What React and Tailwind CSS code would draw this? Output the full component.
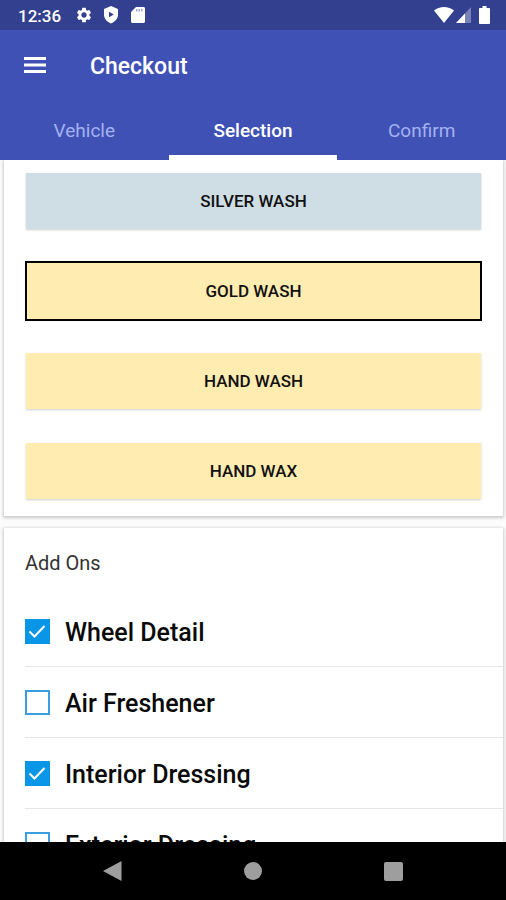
import { useState } from "react";
import { MdSettings } from "react-icons/md";

const tabs = ["Vehicle", "Selection", "Confirm"];
const washes = ["Silver Wash", "Gold Wash", "Hand Wash", "Hand Wax"];
const addOns = ["Wheel Detail", "Air Freshener", "Interior Dressing", "Exterior Dressing"];

function StatusBar() {
  return (
    <div className="flex h-[30px] shrink-0 items-center bg-[#32408f] pl-[18px] pr-4 text-white">
      <span className="w-[57px] pt-0.5 text-[17px] font-medium leading-[28px]">12:36</span>
      <MdSettings className="size-[18px]" />
      <svg className="ml-2.5 h-[18px] w-4" viewBox="0 0 16 18" fill="currentColor" aria-hidden="true">
        <path fillRule="evenodd" d="M8 0 15 3v5.500c0 4.200-3 7.600-7 8.900C4 16.100 1 12.700 1 8.500V3L8 0Zm-2 5.800v5.400L10.800 8.500 6 5.800Z" />
      </svg>
      <svg className="ml-3 h-4 w-[14px]" viewBox="0 0 14 16" aria-hidden="true">
        <path fill="currentColor" d="M5 0h7.500C13.300 0 14 .7 14 1.500v13c0 .8-.7 1.500-1.500 1.500h-11C.7 16 0 15.300 0 14.500V5l5-5Z" />
        <path fill="#a3aad2" d="M5 2h1.500v2.500H5zM7.500 2H9v2.500H7.500zM10 2h1.500v2.500H10z" />
      </svg>
      <svg className="ml-auto h-4 w-5" viewBox="0 0 20 16" fill="currentColor" aria-hidden="true">
        <path d="M10 16 0 3.500C2.800 1.300 6.200 0 10 0s7.200 1.300 10 3.500L10 16Z" />
      </svg>
      <svg className="ml-0.5 h-4 w-[15px]" viewBox="0 0 15 16" fill="currentColor" aria-hidden="true">
        <path opacity=".35" d="M15 0v16H0L15 0Z" />
        <path d="M9 6.400V16H0l9-9.600Z" />
      </svg>
      <svg className="ml-2 h-[18px] w-[11px]" viewBox="0 0 11 18" fill="currentColor" aria-hidden="true">
        <path d="M3.500 0h4v2H10c.6 0 1 .4 1 1v14c0 .6-.4 1-1 1H1c-.6 0-1-.4-1-1V3c0-.6.4-1 1-1h2.500V0Z" />
      </svg>
    </div>
  );
}

function AddOn({ name, checked, onToggle }) {
  return (
    <li className="ml-[21px] border-b border-[#e6e6e6]">
      <label className="flex h-[70px] items-center gap-[15px] text-[25px] font-medium leading-8 text-[#0a0a0a]">
        <span className="grid">
          <input
            type="checkbox"
            checked={checked}
            onChange={onToggle}
            className="col-start-1 row-start-1 size-[25px] appearance-none border-2 border-[#3a9fe0] bg-white checked:border-[#0a96e6] checked:bg-[#0a96e6]"
          />
          {checked && (
            <svg className="pointer-events-none col-start-1 row-start-1 size-[25px]" viewBox="0 0 25 25" fill="none" stroke="white" strokeWidth="2" aria-hidden="true">
              <path d="m4.500 12.500 5 5L19.500 7" />
            </svg>
          )}
        </span>
        <span className="pt-1">{name}</span>
      </label>
    </li>
  );
}

export default function App() {
  const [tab, setTab] = useState("Selection");
  const [wash, setWash] = useState("Gold Wash");
  const [picked, setPicked] = useState(["Wheel Detail", "Interior Dressing"]);
  const toggle = (name) =>
    setPicked((p) => (p.includes(name) ? p.filter((n) => n !== name) : [...p, name]));

  return (
    <div className="flex h-screen flex-col bg-[#fcfcfc] font-['Roboto',sans-serif]">
      <StatusBar />
      <header className="shrink-0 bg-[#3f51b5] text-white">
        <div className="flex h-[72px] items-center gap-10 pl-5">
          <button type="button" aria-label="Open menu">
            <svg className="size-[30px]" viewBox="0 0 30 30" fill="currentColor">
              <path d="M4 6h22v3H4zM4 12.500h22v3H4zM4 19h22v3H4z" />
            </svg>
          </button>
          <h1 className="pt-0.5 text-[23px] font-medium leading-8">Checkout</h1>
        </div>
        <nav className="grid grid-cols-3">
          {tabs.map((t) => (
            <button
              key={t}
              type="button"
              onClick={() => setTab(t)}
              className={
                "h-[58px] border-b-[5px] pt-1 text-[19px] leading-6 " +
                (t === tab ? "border-white font-medium text-white" : "border-transparent text-[#a3b1f0]")
              }
            >
              {t}
            </button>
          ))}
        </nav>
      </header>

      <main className="flex min-h-0 flex-1 flex-col gap-3 overflow-hidden pl-1 pr-[3px]">
        <section className="flex shrink-0 flex-col gap-[34px] bg-white px-[22px] pb-[17px] pt-[13px] shadow-[0_1px_3px_1px_rgba(0,0,0,0.2)]">
          {washes.map((w) => (
            <button
              key={w}
              type="button"
              onClick={() => setWash(w)}
              className={
                "pt-0.5 text-[17px] font-medium uppercase text-[#111] " +
                (w === "Silver Wash" ? "bg-[#cfdde4] " : "bg-[#ffecb0] ") +
                (w === wash ? "-mx-px -my-0.5 h-[60px] border-2 border-black" : "h-14 shadow-[0_1px_2px_rgba(0,0,0,0.2)]")
              }
            >
              {w}
            </button>
          ))}
        </section>

        <section className="shrink-0 bg-white pt-[22px] shadow-[0_1px_3px_1px_rgba(0,0,0,0.2)]">
          <h2 className="mb-5 pl-[21px] text-[20px] leading-[26px] text-[#333]">Add Ons</h2>
          <ul>
            {addOns.map((a) => (
              <AddOn key={a} name={a} checked={picked.includes(a)} onToggle={() => toggle(a)} />
            ))}
          </ul>
        </section>
      </main>

      <footer className="flex h-[58px] shrink-0 items-center justify-center bg-black text-[#9e9e9e]">
        <button type="button" aria-label="Back" className="flex w-[140px] justify-center">
          <svg className="size-5" viewBox="0 0 20 20" fill="currentColor"><path d="M18.500 0v20L0 10 18.500 0Z" /></svg>
        </button>
        <button type="button" aria-label="Home" className="flex w-[140px] justify-center">
          <span className="size-[18px] rounded-full bg-current" />
        </button>
        <button type="button" aria-label="Recent apps" className="flex w-[140px] justify-center">
          <span className="size-[19px] rounded-xs bg-current" />
        </button>
      </footer>
    </div>
  );
}
